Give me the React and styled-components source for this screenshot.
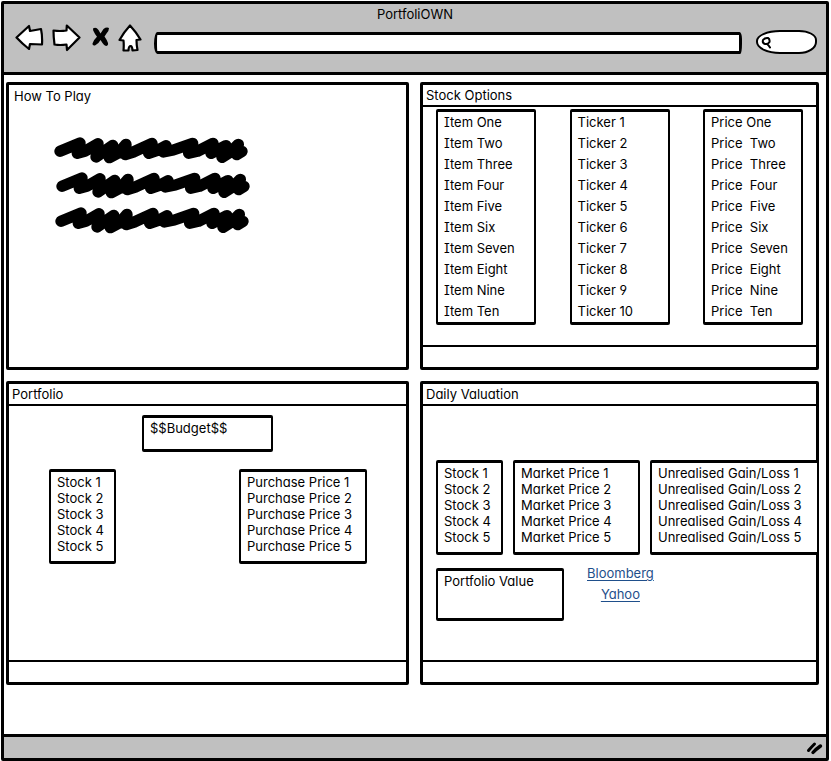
import React from "react";
import styled, { createGlobalStyle } from "styled-components";

const INK = "#000";
const GREY = "#c0c0c0";

const GlobalStyle = createGlobalStyle`
  *, *::before, *::after { box-sizing: border-box; }
  body {
    margin: 0;
    background: #fff;
    color: ${INK};
    font-family: Inter, "Open Sans", "Liberation Sans", sans-serif;
    font-size: 13px;
    line-height: 16px;
    font-feature-settings: "cv11", "cv08", "cv04";
  }
`;

const Page = styled.div`
  display: flex;
  flex-direction: column;
  min-height: 100vh;
  padding: 1px 2px 0 1px;
  background: #fff;
`;

const BrowserWindow = styled.div`
  flex: 1;
  display: flex;
  flex-direction: column;
  border: 3px solid ${INK};
  border-radius: 2px;
  background: #fff;
`;

const Chrome = styled.header`
  height: 71px;
  background: ${GREY};
  border-bottom: 3px solid ${INK};
`;

const WindowTitle = styled.h1`
  margin: 0;
  font-size: 13px;
  font-weight: 400;
  line-height: 20px;
  text-align: center;
`;

const Toolbar = styled.div`
  display: flex;
  align-items: center;
  height: 28px;
  padding: 0 9px 0 11px;
`;

const ToolButton = styled.button`
  display: flex;
  padding: 0;
  margin-right: ${(p) => p.$gap}px;
  border: 0;
  background: none;
  svg { display: block; }
`;

const Address = styled.input`
  flex: 1;
  min-width: 0;
  height: 22px;
  margin: 10px 14px 0 0;
  padding: 0 6px;
  border: 3px solid ${INK};
  border-radius: 4px 3px 2px 4px / 14px 8px 12px 12px;
  background: #fff;
  font: inherit;
  outline: 0;
`;

const SearchField = styled.label`
  display: flex;
  align-items: center;
  width: 61px;
  height: 24px;
  margin-top: 8px;
  padding-left: 3px;
  border: 2px solid ${INK};
  border-radius: 24px 18px 18px 24px / 11px 10px 12px 12px;
  background: #fff;
  overflow: hidden;
  svg { flex: none; }
`;

const SearchInput = styled.input`
  flex: 1;
  min-width: 0;
  border: 0;
  padding: 0;
  background: none;
  font: inherit;
  outline: 0;
`;

const Dashboard = styled.main`
  flex: 1;
  display: grid;
  grid-template-columns: 403fr 399fr;
  grid-auto-rows: min-content;
  gap: 11px;
  padding: 7px 7px 49px 2px;
`;

const Panel = styled.section`
  display: flex;
  flex-direction: column;
  min-width: 0;
  min-height: ${(p) => p.$minHeight}px;
  border: 3px solid ${INK};
  border-radius: 2px;
  background: #fff;
`;

const PanelTitle = styled.h2`
  margin: 0;
  padding: 0 3px;
  font-size: 13px;
  font-weight: 400;
  line-height: 20px;
  border-bottom: 2px solid ${INK};
`;

const PlainTitle = styled(PanelTitle)`
  padding: 1px 5px 0;
  border-bottom: 0;
`;

const PanelBody = styled.div`
  flex: 1;
`;

const PanelFooter = styled.div`
  height: 22px;
  border-top: 2px solid ${INK};
`;

const Scribbles = styled.div`
  display: flex;
  flex-direction: column;
  gap: 6px;
  padding: 30px 0 0 45px;
  svg { display: block; }
`;

const Row = styled.div`
  display: flex;
  align-items: flex-start;
  justify-content: ${(p) => p.$justify || "flex-start"};
  gap: ${(p) => p.$gap || 0}px;
  margin-top: ${(p) => p.$top}px;
  padding: 0 ${(p) => p.$right}px 0 ${(p) => p.$left}px;
`;

const Box = styled.div`
  flex: none;
  width: ${(p) => p.$width}px;
  min-height: ${(p) => p.$minHeight}px;
  padding: 2px 6px;
  border: solid ${INK};
  border-width: 3px 2px;
  border-radius: 2px;
  background: #fff;
`;

const BudgetBox = styled(Box)`
  margin: 9px auto 0;
`;

const ValueBox = styled(Box)`
  margin-top: 5px;
`;

const List = styled.ul`
  flex: none;
  width: ${(p) => p.$width}px;
  margin: 0;
  padding: 2px 6px 7px;
  border: solid ${INK};
  border-width: 3px 2px;
  border-radius: 2px;
  background: #fff;
  list-style: none;
  white-space: pre;
`;

const OptionList = styled(List)`
  padding: 0 6px;
  line-height: 21px;
`;

const OverhangingList = styled(List)`
  flex: 1;
  width: auto;
  margin-right: -3px;
`;

const Links = styled.nav`
  display: flex;
  flex-direction: column;
  align-items: center;
  line-height: 21px;
`;

const ExternalLink = styled.a`
  color: #1f4f8b;
  text-decoration: underline;
  text-underline-offset: 2px;
`;

const StatusBar = styled.footer`
  display: flex;
  align-items: center;
  justify-content: flex-end;
  height: 24px;
  padding-right: 3px;
  background: ${GREY};
  border-top: 3px solid ${INK};
`;

const outline = {
  fill: "#fff",
  stroke: INK,
  strokeWidth: 2.2,
  strokeLinejoin: "round",
  strokeLinecap: "round",
};

const BackIcon = () => (
  <svg width="29" height="28" viewBox="0 0 29 28" {...outline}>
    <path d="M1.5 13.5 L14 2 L15 7 L26 5 Q27.5 12 27 20.5 L15 20 L14 25 Q7 19.500 1.500 13.500 Z" />
  </svg>
);

const ForwardIcon = () => (
  <svg width="30" height="28" viewBox="0 0 30 28" {...outline}>
    <path d="M2.500 6.500 Q9 7.500 15.500 6.500 L15.800 1.500 L28.500 13.500 L16 26 L15.500 20.500 Q9 21.500 3.500 20.500 Q2.500 13 2.500 6.500 Z" />
  </svg>
);

const StopIcon = () => (
  <svg width="18" height="24" viewBox="0 0 18 24" fill={INK}>
    <path d="M1 2.500 Q4 .500 6.500 4 L8.500 7.500 L11.500 3 Q14.500 .800 17 2 Q17 5 14.500 7.500 L12.500 10.500 Q15 14 16 17 Q16.500 19.500 14 20 Q12 19.500 10.500 17 L8.500 14 Q6.500 18 3 19.500 Q.200 20 .500 17.500 Q1.500 14 5 10.800 Q2.500 7.500 1.200 4.500 Z" />
  </svg>
);

const HomeIcon = () => (
  <svg width="24" height="28" viewBox="0 0 24 28" {...outline}>
    <path d="M12 1.500 Q18 8 22.500 15.500 L18.500 16 Q18.500 21 19.500 26 L14.500 26.500 Q14.300 22.500 12.800 22 Q10.500 22 10.500 26.500 L5.500 26.500 Q6 21 5.500 16.500 L1.500 16 Q6 8 12 1.500 Z" />
  </svg>
);

const SearchIcon = () => (
  <svg width="11" height="13" viewBox="0 0 11 13" fill="none" stroke={INK} strokeWidth="2" strokeLinecap="round">
    <path d="M2 4 Q4 1.500 7 2 Q9 3 8.500 6 Q7 8.500 4 8 Q1 7 2 4 Z M6 8 Q7.500 9 9 11.500" />
  </svg>
);

const GripIcon = () => (
  <svg width="17" height="14" viewBox="0 0 17 14" fill="none" stroke={INK} strokeLinecap="round">
    <path strokeWidth="3" d="M2.500 9.500 Q5 6.500 8.500 3" />
    <path strokeWidth="3.400" d="M7 11.500 Q9.500 8.500 14.500 5" />
  </svg>
);

const Scribble = ({ shift = 0 }) => (
  <svg width="198" height="29" viewBox={`${42 - shift * 3} 34 594 87`} fill="none" stroke={INK} strokeWidth="34" strokeLinecap="round" strokeLinejoin="round">
    <path d="M60 80 L120 55 L112 86 L134 80 L174 57 L168 97 L218 62 L208 99 L236 84 L258 59 L256 90 L280 82 L336 56 L326 86 L350 78 L378 63 L370 82 L400 76 L458 56 L446 86 L472 80 L519 56 L513 86 L558 63 L546 98 L572 82 L595 59 L590 90 L606 80" />
  </svg>
);

const stocks = [1, 2, 3, 4, 5];
const words = ["One", "Two", "Three", "Four", "Five", "Six", "Seven", "Eight", "Nine", "Ten"];

const numbered = (label) => stocks.map((n) => <li key={n}>{`${label} ${n}`}</li>);

export default function App() {
  return (
    <>
      <GlobalStyle />
      <Page>
        <BrowserWindow>
          <Chrome>
            <WindowTitle>PortfoliOWN</WindowTitle>
            <Toolbar>
              <ToolButton $gap={7} type="button" aria-label="Back"><BackIcon /></ToolButton>
              <ToolButton $gap={11} type="button" aria-label="Forward"><ForwardIcon /></ToolButton>
              <ToolButton $gap={8} type="button" aria-label="Stop"><StopIcon /></ToolButton>
              <ToolButton $gap={12} type="button" aria-label="Home"><HomeIcon /></ToolButton>
              <Address type="text" aria-label="Address" />
              <SearchField>
                <SearchIcon />
                <SearchInput type="search" aria-label="Search" />
              </SearchField>
            </Toolbar>
          </Chrome>

          <Dashboard>
            <Panel $minHeight={288}>
              <PlainTitle>How To Play</PlainTitle>
              <Scribbles>
                <Scribble />
                <Scribble shift={2} />
                <Scribble shift={1} />
              </Scribbles>
            </Panel>

            <Panel $minHeight={288}>
              <PanelTitle>Stock Options</PanelTitle>
              <PanelBody>
                <Row $top={2} $left={13} $right={13} $justify="space-between">
                  <OptionList $width={100}>
                    {words.map((w) => <li key={w}>{`Item ${w}`}</li>)}
                  </OptionList>
                  <OptionList $width={100}>
                    {words.map((w, i) => <li key={w}>{`Ticker ${i + 1}`}</li>)}
                  </OptionList>
                  <OptionList $width={100}>
                    {words.map((w, i) => <li key={w}>{i === 0 ? `Price ${w}` : `Price  ${w}`}</li>)}
                  </OptionList>
                </Row>
              </PanelBody>
              <PanelFooter />
            </Panel>

            <Panel $minHeight={304}>
              <PanelTitle>Portfolio</PanelTitle>
              <PanelBody>
                <BudgetBox $width={131} $minHeight={37}>$$Budget$$</BudgetBox>
                <Row $top={17} $left={40} $right={39} $justify="space-between">
                  <List $width={67}>{numbered("Stock")}</List>
                  <List $width={128}>{numbered("Purchase Price")}</List>
                </Row>
              </PanelBody>
              <PanelFooter />
            </Panel>

            <Panel $minHeight={304}>
              <PanelTitle>Daily Valuation</PanelTitle>
              <PanelBody>
                <Row $top={54} $left={13} $right={0} $gap={10}>
                  <List $width={67}>{numbered("Stock")}</List>
                  <List $width={127}>{numbered("Market Price")}</List>
                  <OverhangingList>{numbered("Unrealised Gain/Loss")}</OverhangingList>
                </Row>
                <Row $top={8} $left={13} $right={13} $gap={23}>
                  <ValueBox $width={128} $minHeight={53}>Portfolio Value</ValueBox>
                  <Links>
                    <ExternalLink href="#bloomberg">Bloomberg</ExternalLink>
                    <ExternalLink href="#yahoo">Yahoo</ExternalLink>
                  </Links>
                </Row>
              </PanelBody>
              <PanelFooter />
            </Panel>
          </Dashboard>

          <StatusBar><GripIcon /></StatusBar>
        </BrowserWindow>
      </Page>
    </>
  );
}
